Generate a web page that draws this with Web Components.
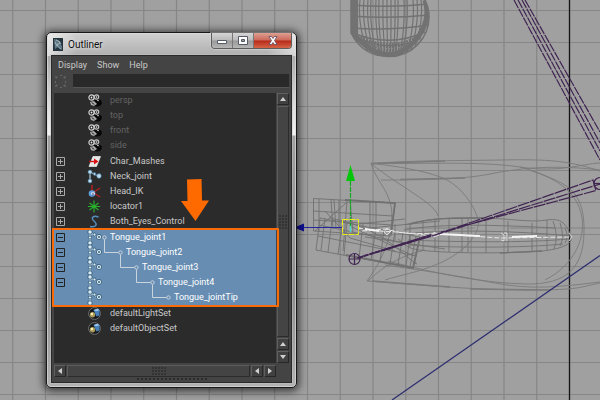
<!DOCTYPE html>
<html lang="en">
<head>
<meta charset="utf-8">
<title>Outliner</title>
<style>
  html, body { height: 100%; margin: 0; }
  body { position: relative; overflow: hidden; background: #a0a0a0; font-family: Roboto, "Noto Sans", sans-serif; font-size: 9px; }
</style>
</head>
<body>
<scene-view></scene-view>
<outliner-window heading="Outliner">
  <tree-group>
    <tree-row icon="camera" dim>persp</tree-row>
    <tree-row icon="camera" dim>top</tree-row>
    <tree-row icon="camera" dim>front</tree-row>
    <tree-row icon="camera" dim>side</tree-row>
  </tree-group>
  <tree-group>
    <tree-row icon="mesh" toggle="plus">Char_Mashes</tree-row>
    <tree-row icon="joint" toggle="plus">Neck_joint</tree-row>
    <tree-row icon="ik" toggle="plus">Head_IK</tree-row>
    <tree-row icon="locator" toggle="plus">locator1</tree-row>
    <tree-row icon="curve" toggle="plus">Both_Eyes_Control</tree-row>
  </tree-group>
  <tree-group selected>
    <tree-row icon="chain" toggle="minus" level="0">Tongue_joint1</tree-row>
    <tree-row icon="chain" toggle="minus" level="1">Tongue_joint2</tree-row>
    <tree-row icon="chain" toggle="minus" level="2">Tongue_joint3</tree-row>
    <tree-row icon="chain" toggle="minus" level="3">Tongue_joint4</tree-row>
    <tree-row icon="chain" level="4">Tongue_jointTip</tree-row>
  </tree-group>
  <tree-group>
    <tree-row icon="set">defaultLightSet</tree-row>
    <tree-row icon="set">defaultObjectSet</tree-row>
  </tree-group>
</outliner-window>
<callout-arrow></callout-arrow>

<script>
const ICONS = {
  camera: `<ellipse cx="10" cy="10" rx="4.500" ry="3.600" fill="#090909"/><circle cx="4.500" cy="4.500" r="2.600" fill="#222" stroke="#d0d0d0" stroke-width="1.200"/><circle cx="9.500" cy="4" r="2.200" fill="#222" stroke="#c5c5c5" stroke-width="1.200"/><circle cx="4.500" cy="4.500" r=".9" fill="#eee"/><circle cx="9.500" cy="4" r=".8" fill="#eee"/><path d="M3 9l4-1 3 3-3 2-3-1z" fill="#aaa"/><path d="M5 9.500l2 2M11 7l3 1v3l-3-1z" stroke="#000" fill="#111"/><circle cx="11" cy="7.500" r=".8" fill="#ddd"/>`,
  mesh: `<path d="M6 2.500h7.500l-4 10H2z" fill="#e8e8e8" stroke="#fff" stroke-width=".6"/><path d="M2 7.500h8" stroke="#c11" stroke-width="1.400"/><path d="M7 4.500l4.500 3-4.500 3z" fill="#d11"/>`,
  joint: `<path d="M3 3v9M3 3l7 3.500" stroke="#a8c3d6" stroke-width="1.300" fill="none"/><g fill="#b9dcf0" stroke="#2d5975" stroke-width=".6"><circle cx="3" cy="3" r="2.100"/><circle cx="3" cy="12" r="2.100"/><circle cx="12" cy="7" r="2.400"/><circle cx="7.500" cy="5" r="1.400"/></g>`,
  ik: `<path d="M5 1v6M7 8l6-4M7 9l6 4" stroke="#b4201f" stroke-width="1.500"/><circle cx="5" cy="9.500" r="3.300" fill="#5d9fdb"/><circle cx="6" cy="9.500" r="1.700" fill="#fff"/><path d="M6 8.500v3" stroke="#226"/>`,
  locator: `<path d="M7 1.500v12M1 7.500h12M2.500 4l9 7M11.500 4l-9 7" stroke="#25b32b" stroke-width="1.200"/>`,
  curve: `<path d="M11.500 3C6 1 3.500 4 7 7s3 6.500-4 5.500" fill="none" stroke="#568cbc" stroke-width="1.500"/>`,
  chain: `<path d="M3 2v11M3 3l8 4" stroke="#dfebf2" stroke-width="1.200"/><g fill="#d8edf7" stroke="#28506c" stroke-width=".8"><circle cx="3" cy="2" r="2.200"/><circle cx="3" cy="7.500" r="1.600"/><circle cx="3" cy="13" r="2.200"/><circle cx="12" cy="7" r="2.600"/><circle cx="7.500" cy="4.500" r="1.500"/></g><circle cx="12" cy="7" r=".9" fill="#2e4d66"/>`,
  set: `<circle cx="7.500" cy="7.500" r="5.900" fill="#16191c" stroke="#777" stroke-width=".9"/><path d="M6.500 4l4-1.200 2 1.400v5.300l-3 1z" fill="#477fb8"/><path d="M6.500 4l4-1.200 2 1.400-3.500 1z" fill="#9dc9f2"/><circle cx="5.500" cy="8.700" r="2.700" fill="#a99a5c"/><circle cx="4.900" cy="8" r="1.200" fill="#fff3b8"/>`
};

const define = (name, html, setup) => {
  const template = document.createElement('template');
  template.innerHTML = html;
  customElements.define(name, class extends HTMLElement {
    connectedCallback() {
      if (this.shadowRoot) return;
      const root = this.attachShadow({ mode: 'open' });
      root.append(template.content.cloneNode(true));
      if (setup) setup(this, root);
    }
  });
};

define('scene-view', `
<style>
  :host { display: block; width: 100%; height: 100%; }
  svg { display: block; width: 100%; height: 100%; }
</style>
<svg viewBox="0 0 600 400" preserveAspectRatio="xMinYMin slice" fill="none" aria-hidden="true">
  <rect width="600" height="400" fill="#a0a0a0"/>
  <g id="grid" stroke="#868686" stroke-width="1.200"></g>
  <path d="M569.500 0V400" stroke="#151515" stroke-width="1.300"/>
  <g stroke="#727272">
    <clipPath id="ball"><path d="M351 0V33C359 49 373 56.500 389 56.500C412 56.500 429 38 429 17C429 10 427 4 425 0Z"/></clipPath>
    <path d="M351 0V33C359 49 373 56.500 389 56.500C412 56.500 429 38 429 17C429 10 427 4 425 0" stroke-width="1.500"/>
    <g clip-path="url(#ball)">
      <path d="M354.500 0V42" stroke-width="7"/>
      <path d="M425 0Q432 22 414 42Q402 54 389 55Q370 54 354 34" stroke-width="5"/>
      <path d="M351 5Q390 8 429 4M351 16Q390 19 429 15M351 28Q390 31 429 25M353 33Q390 48 425 32M356 37Q390 54 421 38" stroke-width="1.500"/>
      <path id="ribs" stroke-width="1.200"/>
      <path d="M360 38Q390 53 418 38M366 45Q390 57 412 45" stroke-width="5" stroke-dasharray="2 1"/>
    </g>
  </g>
  <g stroke="#7b7b7b" stroke-width=".9">
    <path d="M371 163.500C420 160 450 161 500 160S570 161 600 171M371 163.500C420 164 480 161 520 167S580 164 600 163M520 167C555 177 575 190 581 213S575 265 545 280"/>
    <path d="M381 180C430 180 465 179 490 174S550 164 600 170M371 163.500C398 166 432 172 447 180S475 206 478 220S463 253 440 263S400 275 385 280"/>
    <path d="M371 163.500C375 178 388 190 391 206S390 250 367 281M371 163.500C400 187 435 203 438 216"/>
    <path d="M367 281C430 286 480 290 530 290S580 287 600 283M368 281C385 265 400 256 425 250M385 265C420 270 460 276 495 283S560 287 600 282M388 261C430 272 480 283 525 284S585 265 584 226S562 182 530 170"/>
    <path d="M371 163.500L445 161M400 179.500L465 178M372 281L450 287M470 289L550 290" stroke-width="1.400"/>
  </g>
  <g stroke="#727272" stroke-width=".9">
    <path d="M405 225C430 217 460 218 483 218S530 223 547 220S568 228 571 237S553 250 542 251S485 254 445 252S410 248 398 239"/>
    <path d="M404 230C440 223 500 225 555 228M402 234C450 229 520 231 570 236M408 240C450 242 530 243 568 239M410 245C450 248 525 248 563 244"/>
    <path d="M410 224V247M423 221V250M435 219V251M449 219V252M462 218V252M468 218V252M486 218V253M508 221V253M532 223V252M547 220V251M553 221Q559 236 554 249M560 223Q565 237 560 246M565 228Q569 237 565 243M358 224L405 219M360 229L440 221M365 237L445 249M395 224L395 240"/>
    <path d="M410 224C435 217 460 218 483 218M500 253L542 251" stroke-width="1.400"/>
    <path d="M405 228H475M510 228H600" stroke-width=".6"/>
  </g>
  <g stroke="#707070" stroke-width=".9">
    <path d="M313.500 198.500L395 203L391 236L313.500 231Z"/>
    <path d="M345 200L395 203L391 234" stroke-width="1.800"/>
    <path d="M319 199V232M331 200L333 229M334 200L336 229M339 200V229M350 201L353 233M370 202V230M376 202V230M313 211L393 216M313 220L393 225"/>
    <path d="M320 218L420 237L413 268L316 250Z"/>
    <path d="M346 255L413 268L420 237" stroke-width="1.800"/>
    <path d="M325 218L321 250M332 220L328 252M343 220L338 254M347 222L344 255M363 224L359 258M376 228L371 260M384 229L380 262M395 231L390 264M403 233L398 265M410 235L406 266M416 236L410 267M319 225L419 246M318 236L417 256M330 218Q370 225 397 248T414 261M350 226L414 256"/>
    <path d="M325 211L350 238L395 251M347 201L343 251M315 231L347 202"/>
  </g>
  <path d="M358 228L380 231L396 232L435 236M362 231L385 229L402 233L440 234L500 238L570 237" stroke="#e8e8e8" stroke-dasharray="5 2"/>
  <path d="M440 234L480 236M512 237L537 236M365 229l14 2" stroke="#f4f4f4" stroke-width="1.800"/>
  <path d="M387 228l4 3-4 4-3-3zM501 233l3 2v6l-3-1M504 233h3v8M434 232l5 3-5 2zM569 233l3 4-3 4" stroke="#e2e2e2" stroke-width=".9"/>
  <g stroke="#402452" stroke-width="1.200">
    <path d="M514 0L600 160M518 0L600 151M522 0L600 143M525 0L600 132" stroke-dasharray="9 1"/>
    <path d="M357 258L432 236L593 180L596 190.500L441 232M432 236L600 184M357 258L430 235" stroke-dasharray="12 1"/>
    <path d="M358 258L432 235" stroke-width="1.800" stroke-dasharray="5 1"/>
    <circle cx="354.500" cy="259" r="5.500"/><path d="M349 259h11M354.500 253.500v11"/>
    <circle cx="600" cy="183.500" r="6"/><path d="M594 183.500h6"/>
  </g>
  <path d="M600 255.500L392 400" stroke="#2c2c70" stroke-width="1.200"/>
  <path d="M303 227.500H343" stroke="#2626a0"/>
  <path d="M294 227.500L304 223.500V231.500Z" fill="#10109a"/>
  <path d="M350.500 228V180" stroke="#13a823" stroke-width="1.200" stroke-dasharray="5 1"/>
  <path d="M350.500 165L355 181H346Z" fill="#04c60a"/>
  <path d="M342.500 219.500h16v15h-16z" stroke="#ecec19" stroke-dasharray="6 1"/>
  <path d="M350.500 226v6" stroke="#4fd8c8" stroke-width="1.500"/>
</svg>`, (host, root) => {
  let d = '';
  for (let k = 0; k <= 17; k++) d += `M${569.5 - 32.75 * k} 0V400`;
  for (let y = 10; y < 400; y += 32) d += `M0 ${y + .5}H600`;
  root.getElementById('grid').innerHTML = `<path d="${d}"/>`;
  let ribs = '';
  for (const x of [360, 364, 368, 371, 376, 379, 383, 387, 391, 395, 398, 404, 407, 413, 417, 421])
    ribs += `M${x} 0Q${x + (x - 390) * .1} 25 ${390 + (x - 390) * .7} 56`;
  root.getElementById('ribs').setAttribute('d', ribs);
});

define('callout-arrow', `
<style>
  :host { position: absolute; left: 181px; top: 179px; display: block; }
  svg { display: block; }
</style>
<svg width="28" height="43" aria-hidden="true"><path d="M6 .500L20.500 0L21 21.500H28L14.500 42L0 22H6.500Z" fill="#ff6a00"/></svg>`);

define('tree-group', `
<style>
  :host { display: block; position: relative; }
  :host([selected]) { background: #678db2; color: #fff; }
  :host([selected])::after { content: ""; position: absolute; inset: -2px -3px -2px -2px; border: 2px solid #f96a08; pointer-events: none; }
</style><slot></slot>`);

define('tree-row', `
<style>
  :host { display: flex; align-items: center; height: 15px; padding-left: 2px; white-space: nowrap; line-height: 15px; }
  :host([dim]) .label { color: #646464; }
  .slot { flex: none; width: 31px; display: flex; }
  button { width: 9px; height: 9px; padding: 0; border: 0; background: none; color: #aaa; display: block; }
  :host([level]) button { color: #222; }
  svg { display: block; flex: none; overflow: visible; }
  .lead { flex: none; width: 8px; display: flex; justify-content: flex-end; }
</style>
<span class="slot"></span>
<svg class="icon" width="15" height="15" fill="none" aria-hidden="true"></svg>
<span class="lead"></span><span class="label"><slot></slot></span>`, (host, root) => {
  root.querySelector('.icon').innerHTML = ICONS[host.getAttribute('icon')];
  const toggle = host.getAttribute('toggle');
  if (toggle) root.querySelector('.slot').innerHTML =
    `<button type="button" aria-label="Expand or collapse ${host.textContent}"><svg width="9" height="9" fill="none" stroke="currentColor"><path d="M.500 .500h8v8h-8zM2 4.500h5${toggle === 'plus' ? 'M4.500 2v5' : ''}"/></svg></button>`;
  if (host.hasAttribute('level')) {
    const level = +host.getAttribute('level');
    const lead = root.querySelector('.lead');
    lead.style.width = 8 + 16 * level + 'px';
    lead.innerHTML = `<svg width="24" height="15" fill="none" stroke="#c9d4de"><circle cx="18.500" cy="7.500" r="1.700"/>${level ? '<path d="M2.500 -5.500V7.500H16.500"/>' : ''}</svg>`;
  }
});

define('scroll-button', `
<style>
  :host { display: block; flex: none; }
  button { display: grid; place-items: center; width: 12px; height: 12px; padding: 0; border: 1px solid #606060; border-right-color: #272727; border-bottom-color: #272727; background: #414141; color: #d0d0d0; }
  svg { display: block; }
  :host([dir="down"]) svg { transform: rotate(180deg); }
  :host([dir="left"]) svg { transform: rotate(270deg); }
  :host([dir="right"]) svg { transform: rotate(90deg); }
</style>
<button type="button"><svg width="6" height="6"><path d="M3 1L6 5H0Z" fill="currentColor"/></svg></button>`,
(host, root) => root.querySelector('button').setAttribute('aria-label', 'Scroll ' + host.getAttribute('dir')));

define('scroll-track', `
<style>
  :host { flex: 1; display: grid; place-items: center; border: 1px solid #5c5c5c; border-right-color: #2c2c2c; border-bottom-color: #2c2c2c; background: #444; }
  i { width: 8px; height: 14px; background: radial-gradient(circle at 1px 1px, #333 0 1px, transparent 1px) 0 0 / 3px 3px; }
  :host([across]) i { width: 14px; height: 8px; }
</style><i></i>`);

define('outliner-window', `
<style>
  :host {
    position: absolute; left: 46px; top: 32px; width: 251px; box-sizing: border-box;
    display: flex; flex-direction: column; padding: 0 4px 4px; border: 1px solid #181818; border-radius: 5px;
    background: linear-gradient(90deg, #fff9 0, #fff0 12%, #fff0 30%, #fff0 88%, #fff8 100%) 0 0 / 100% 23px no-repeat, linear-gradient(#d0d0d0 0, #ababab 25px, #dedede 75px, #f4f4f4 102px, #a0a0a0 103px, #8c8c8c 260px, #b2b2b2 100%);
    box-shadow: inset 0 0 0 1px #ddda, 0 1px 8px 2px #000a; color: #c9c9c9;
  }
  header { display: flex; height: 22px; align-items: flex-start; color: #101010; }
  header > svg { margin: 5px 5px 0 2px; }
  h1 { margin: 4px 0 0; font-size: 10px; font-weight: 400; line-height: 16px; flex: 1; text-shadow: 0 0 5px #fff; }
  .controls { display: flex; height: 16px; border: 1px solid #5d5d5d; border-top: 0; border-radius: 0 0 4px 4px; overflow: hidden; box-sizing: border-box; box-shadow: 0 0 0 1px #ddd7; }
  .controls button { display: grid; place-items: center; width: 21px; padding: 0; border: 0; border-right: 1px solid #777; background: linear-gradient(#d5d5d5, #b9b9b9 48%, #999 52%, #b5b5b5); }
  .controls button:last-child { width: 37px; border: 0; background: linear-gradient(#dda092, #cb6858 48%, #b8281a 52%, #d36445); }
  main { border: 1px solid #2a2a2a; outline: 1px solid #c5c5c577; background: #444; padding: 0 2px; }
  nav { display: flex; gap: 10px; padding-left: 4px; height: 18px; align-items: center; }
  nav button { border: 0; padding: 0; background: none; color: inherit; font: inherit; line-height: 16px; }
  .search { display: flex; align-items: center; gap: 7px; padding: 0 0 5px 1px; }
  input { flex: 1; min-width: 0; height: 14px; box-sizing: border-box; border: 0; border-bottom: 1px solid #555; background: #292929; color: #ccc; font: inherit; padding: 0 3px; }
  .body { display: grid; grid-template-columns: 1fr 12px; column-gap: 1px; row-gap: 2px; }
  .list { background: #2b2b2b; min-height: 270px; display: flex; flex-direction: column; gap: 1px; }
  .v { display: flex; flex-direction: column; gap: 1px; }
  .h { display: flex; gap: 1px; }
  .grip { height: 4px; width: 70px; margin: 0 auto 1px; background: radial-gradient(circle at 1px 2px, #2c2c2c 0 1px, transparent 1px) 0 0 / 4px 4px; }
</style>
<header>
  <svg width="10" height="13" aria-hidden="true"><path d="M0 0h10v13H0z" fill="#26343d"/><path d="M1 1l4 1 4 6v4L5 9 2 11z" fill="#5f7883"/><path d="M3 2c5 1 4 5 2 4s0 4 3 5M2 4l2 4M6 3l2 3" fill="none" stroke="#b5c8cf" stroke-width=".8"/></svg>
  <h1></h1>
  <div class="controls">
    <button type="button" aria-label="Minimize"><svg width="10" height="8"><path d="M.500 3.500h9v3h-9z" fill="#fff" stroke="#555a68"/></svg></button>
    <button type="button" aria-label="Maximize"><svg width="10" height="9"><path d="M.500 .500h9v8h-9z" fill="#fff" stroke="#555a68"/><path d="M3.500 3.500h3v2h-3z" fill="#999" stroke="#555a68"/></svg></button>
    <button type="button" aria-label="Close"><svg width="10" height="9"><path d="M1 .500h2.500L5 2.500 6.500 .500H9L6.500 4.500 9 8.500H6.500L5 6.500 3.500 8.500H1L3.500 4.500Z" fill="#fff" stroke="#59485a" stroke-width=".8"/></svg></button>
  </div>
</header>
<main>
  <nav aria-label="Menu"><button type="button">Display</button><button type="button">Show</button><button type="button">Help</button></nav>
  <div class="search">
    <svg width="11" height="13" fill="#666" aria-hidden="true"><path d="M0 1l3 1-2 2zM5 0h2v1H5zM11 1L8 2l2 2zM0 12l3-1-2-2zM5 12h2v1H5zM11 12l-3-1 2-2zM0 6h1v2H0zM10 6h1v2h-1z"/></svg>
    <input type="text" aria-label="Filter by name">
  </div>
  <div class="body">
    <div class="list"><slot></slot></div>
    <div class="v"><scroll-button dir="up"></scroll-button><scroll-track></scroll-track><scroll-button dir="up"></scroll-button><scroll-button dir="down"></scroll-button></div>
    <div class="h"><scroll-button dir="left"></scroll-button><scroll-track across></scroll-track><scroll-button dir="left"></scroll-button><scroll-button dir="right"></scroll-button></div>
  </div>
  <div class="grip"></div>
</main>`, (host, root) => { root.querySelector('h1').textContent = host.getAttribute('heading'); });
</script>
</body>
</html>
